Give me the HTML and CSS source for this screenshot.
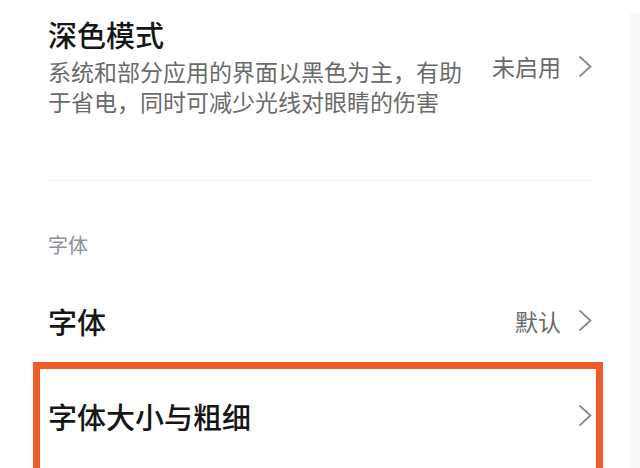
FILE: index.html
```html
<!DOCTYPE html>
<html lang="zh-CN">
<head>
<meta charset="utf-8">
<title>显示设置</title>
<link rel="stylesheet" href="styles.css">
</head>
<body>
<div class="page">
  <main class="main">
    <div class="item item-dark">
      <div class="item-text">
        <div class="title">深色模式</div>
        <div class="desc">系统和部分应用的界面以黑色为主，有助于省电，同时可减少光线对眼睛的伤害</div>
      </div>
      <div class="value">
        <span>未启用</span>
        <svg class="chev" width="14" height="23" viewBox="0 0 14 23"><polyline points="1.5,1.5 12.5,11.5 1.5,21.5" fill="none" stroke="#8a8a8a" stroke-width="1.8"/></svg>
      </div>
    </div>
    <div class="divider"></div>
    <div class="section-label">字体</div>
    <div class="row">
      <div class="title">字体</div>
      <div class="value">
        <span>默认</span>
        <svg class="chev" width="14" height="23" viewBox="0 0 14 23"><polyline points="1.5,1.5 12.5,11.5 1.5,21.5" fill="none" stroke="#8a8a8a" stroke-width="1.8"/></svg>
      </div>
    </div>
    <div class="row">
      <div class="title">字体大小与粗细</div>
      <div class="value">
        <svg class="chev" width="14" height="23" viewBox="0 0 14 23"><polyline points="1.5,1.5 12.5,11.5 1.5,21.5" fill="none" stroke="#8a8a8a" stroke-width="1.8"/></svg>
      </div>
    </div>
    <div class="highlight"></div>
  </main>
  <aside class="edge"></aside>
</div>
</body>
</html>
```
FILE: styles.css
```css
html, body {
  margin: 0;
  padding: 0;
  background: #ffffff;
}
body {
  font-family: "Noto Sans CJK SC", "Noto Sans", sans-serif;
  overflow: hidden;
  height: 468px;
}
.page {
  display: flex;
  height: 468px;
}
.main {
  position: relative;
  flex: 1;
  padding: 0 38px 0 48px;
  overflow: hidden;
}
.edge {
  width: 10px;
  margin-top: 13px;
  background: #f8f8f8;
}
.item-dark {
  display: flex;
  align-items: center;
  justify-content: space-between;
  padding: 16px 0 64px;
}
.title {
  font-size: 29px;
  line-height: 36px;
  font-weight: 500;
  color: #161616;
}
.desc {
  margin-top: 4px;
  max-width: 420px;
  font-size: 23px;
  line-height: 30px;
  color: #6a6a6a;
}
.value {
  display: flex;
  align-items: center;
  gap: 17px;
  font-size: 23px;
  line-height: 30px;
  color: #6a6a6a;
}
.chev {
  display: block;
}
.divider {
  height: 1px;
  background: #f1f1f1;
}
.section-label {
  margin-top: 50px;
  font-size: 20px;
  line-height: 28px;
  color: #8b909b;
}
.row {
  display: flex;
  align-items: center;
  justify-content: space-between;
  height: 95px;
}
.section-label + .row {
  margin-top: 14px;
}
.highlight {
  position: absolute;
  left: 33px;
  top: 362px;
  width: 556px;
  height: 200px;
  border: 7px solid #ef5b2b;
}
```
